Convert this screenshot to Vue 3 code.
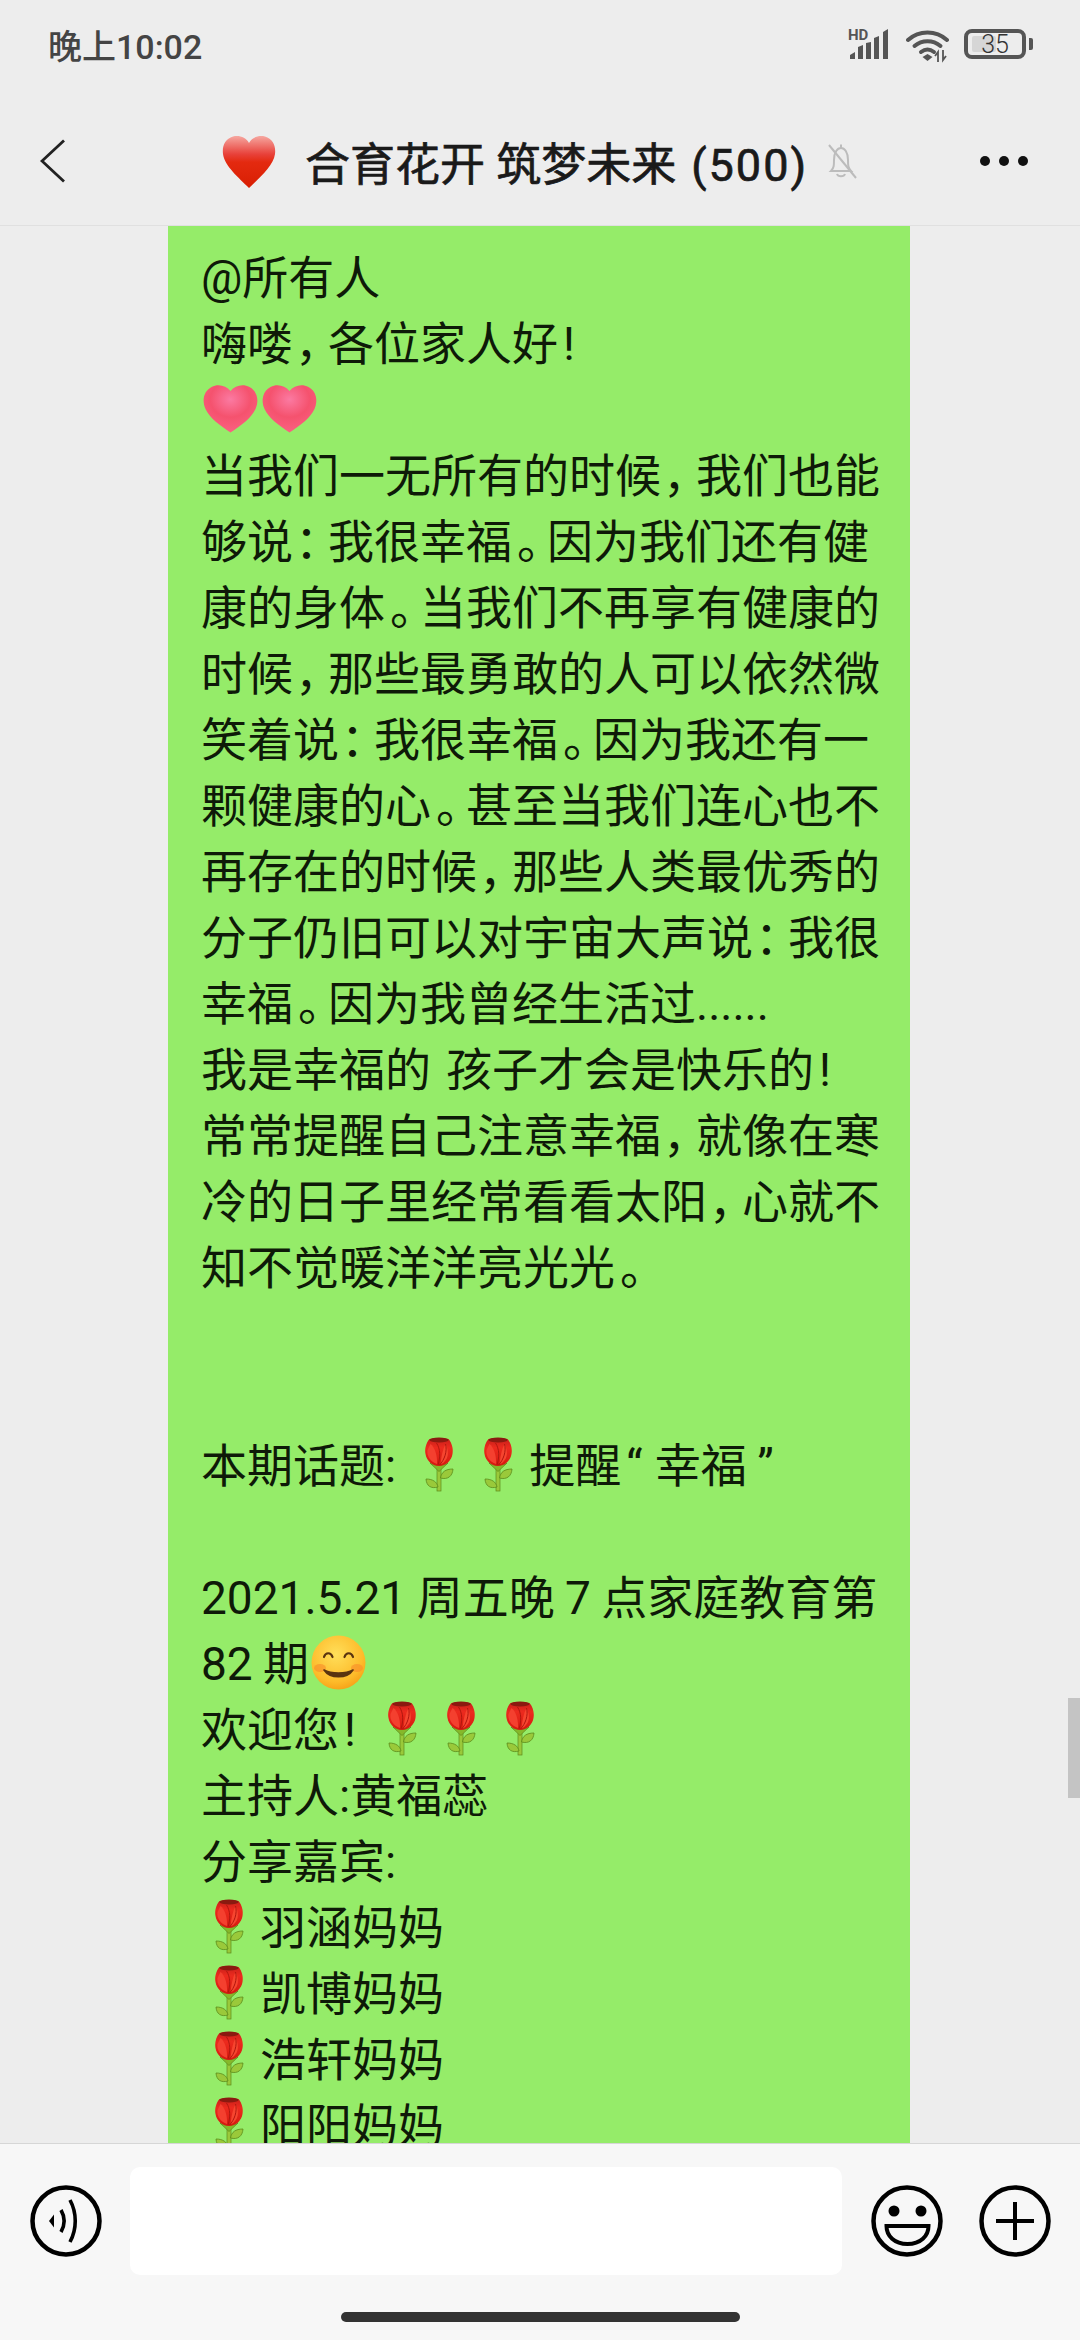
<template>
  <div class="screen">
    <!-- 공용 이모지 정의 -->
    <svg class="defs" aria-hidden="true">
      <defs>
        <linearGradient id="redHeart" x1="0" y1="0" x2="0" y2="1">
          <stop offset="0" stop-color="#f6a7a0" />
          <stop offset="0.35" stop-color="#e8413a" />
          <stop offset="0.5" stop-color="#e42a10" />
          <stop offset="1" stop-color="#d81e02" />
        </linearGradient>
        <radialGradient id="pinkHeart" cx="0.5" cy="0.3" r="0.75">
          <stop offset="0" stop-color="#fb7aa2" />
          <stop offset="0.5" stop-color="#f5526e" />
          <stop offset="1" stop-color="#fb6485" />
        </radialGradient>
        <radialGradient id="smileFace" cx="0.45" cy="0.35" r="0.72">
          <stop offset="0" stop-color="#ffdf5a" />
          <stop offset="0.7" stop-color="#fdbb2a" />
          <stop offset="1" stop-color="#f59a12" />
        </radialGradient>
        <linearGradient id="roseHead" x1="0" y1="0" x2="0" y2="1">
          <stop offset="0" stop-color="#c4201a" />
          <stop offset="0.35" stop-color="#ec2a1e" />
          <stop offset="1" stop-color="#d41a10" />
        </linearGradient>
        <symbol id="rose" viewBox="0 0 59 59">
          <rect x="26" y="32" width="4" height="24" fill="#9ac93a" stroke="#5c8a1a" stroke-width="0.700" />
          <path d="M29.500 43c1-6 5-9 12.500-9-.5 7-5 11-12.500 9z" fill="#9ac93a" stroke="#5c8a1a" stroke-width="0.800" />
          <path d="M27 52c-1-5-5-8-12-8 .5 7 5 10 12 8z" fill="#9ac93a" stroke="#5c8a1a" stroke-width="0.800" />
          <path d="M19 28l9 8.500 9-8.500c-4 3-14 3-18 0z" fill="#86b82a" stroke="#5c8a1a" stroke-width="0.700" />
          <g transform="translate(-1.500 0)">
            <path d="M20 4C24 2.500 35 2.500 39 4c3.500 4 5 10 4 15-1 7-7 12-13.500 12C23 31 17 26 16 19c-1-5 .5-11 4-15z" fill="url(#roseHead)" />
            <path d="M21 9c4 3 7 11 6.500 20C21 27 17 21 18 15z" fill="#f4402f" />
            <path d="M36 9c3 6 3 11 1 15-2 3-4 5-6 5 1-8 2-14 5-20z" fill="#f6452f" />
            <path d="M27 8c4 6 4 14 1.500 22M36 9c2 7-1 16-6 21" fill="none" stroke="#b0160e" stroke-width="1" />
            <ellipse cx="29.500" cy="5" rx="9.500" ry="2.600" fill="#8a1a10" />
          </g>
        </symbol>
        <symbol id="heart" viewBox="0 0 59 59">
          <path d="M29.500 12C25 6.500 17 4.500 10.500 8 3 12 .500 21 4.500 30c4 9 15 17 25 23.500C39.500 47 50.500 39 54.500 30c4-9 1.500-18-6-22C42 4.500 34 6.500 29.500 12z" fill="url(#pinkHeart)" />
        </symbol>
        <symbol id="smile" viewBox="0 0 59 59">
          <circle cx="29.500" cy="29.500" r="27" fill="url(#smileFace)" />
          <ellipse cx="11" cy="35" rx="6" ry="4" fill="#f88a2a" opacity="0.6" />
          <ellipse cx="48" cy="35" rx="6" ry="4" fill="#f88a2a" opacity="0.6" />
          <path d="M15 24c1.500-5 7-5 8.500 0M35.500 24c1.500-5 7-5 8.500 0" stroke="#5a3410" stroke-width="2.200" fill="none" stroke-linecap="round" />
          <path d="M15 37c6 9 23 9 29 0-7 4-22 4-29 0z" fill="#5a3410" stroke="#5a3410" stroke-width="1.600" stroke-linejoin="round" />
        </symbol>
      </defs>
    </svg>

    <header class="top">
      <div class="status">
        <span class="clock">晚上10:02</span>
        <div class="status-icons">
          <svg class="ic-signal" width="42" height="32" viewBox="0 0 42 32">
            <text x="0" y="12" class="hd">HD</text>
            <path d="M2 31v-4l5-3v7zM10 31V19l5-2v14zM18 31V15l5-1v17zM26 31V10l5-2v23zM35 31V4l5-3v30z" fill="#555" />
          </svg>
          <svg class="ic-wifi" width="44" height="33" viewBox="0 0 44 33">
            <g fill="none" stroke="#555" stroke-width="4" stroke-linecap="round">
              <path d="M2 10c11-10 28-10 39 0" />
              <path d="M8.500 16c7.500-6.500 18.500-6.500 26 0" />
              <path d="M15 22c4-3 9-3 13 0" />
            </g>
            <path d="M21.500 24l5 3-5 4-5-4z" fill="#555" />
            <path d="M32 32V22l-3 4M37 20v10l3-4" fill="none" stroke="#555" stroke-width="1.800" />
          </svg>
          <div class="battery">
            <span class="battery-fill"></span>
            <span class="battery-num">35</span>
            <span class="battery-cap"></span>
          </div>
        </div>
      </div>
      <div class="nav">
        <svg class="back" width="25" height="44" viewBox="0 0 25 44">
          <path d="M24 1.500 2 22l22 20.500" fill="none" stroke="#222" stroke-width="2.800" />
        </svg>
        <svg class="title-heart" width="54" height="53" viewBox="0 0 54 53">
          <path d="M27 8C24 2 17 0 11 1.500 3 4 0 11 1 19c1.500 12 16 24 26 34 10-10 24.500-22 26-34 1-8-2-15-10-17.500C37 0 30 2 27 8z" fill="url(#redHeart)" />
        </svg>
        <span class="title">合育花开 筑梦未来<span class="count">(500)</span></span>
        <svg class="mute" width="36" height="36" viewBox="0 0 36 36">
          <g fill="none" stroke="#bcbcbc" stroke-width="2">
            <path d="M17 1.500v3M7 28c3-3 3-6 3-11 0-8 3.500-12 7-12s7 4 7 12c0 5 0 8 3 11z" />
            <path d="M13 31c1 3 7 3 8 0" />
            <path d="M5 2l27 33" />
          </g>
        </svg>
        <div class="more"><i></i><i></i><i></i></div>
      </div>
    </header>

    <main class="chat">
      <div class="bubble">
        <div v-for="(line, i) in rows" :key="i" class="line">
          <template v-for="(part, j) in line" :key="j">
            <svg v-if="part.icon" class="emoji"><use :href="part.icon" /></svg>
            <span v-else :class="part.cls">{{ part.text }}</span>
          </template>
        </div>
      </div>
      <div class="scroll-thumb"></div>
    </main>

    <footer class="bottom">
      <div class="input-row">
        <svg class="round" viewBox="0 0 72 72">
          <circle cx="36" cy="36" r="33.500" fill="none" stroke="#000" stroke-width="4.500" />
          <path d="M19 36l5-6.500v13z" fill="#000" />
          <path d="M31 25c4 7 4 15 0 22" fill="none" stroke="#000" stroke-width="3.600" />
          <path d="M40 15c7 13 7 29 0 42" fill="none" stroke="#000" stroke-width="3.600" />
        </svg>
        <div class="input"></div>
        <svg class="round" viewBox="0 0 72 72">
          <circle cx="36" cy="36" r="33.500" fill="none" stroke="#000" stroke-width="4.500" />
          <circle cx="23" cy="26" r="5.500" />
          <circle cx="50" cy="26" r="5.500" />
          <path d="M15.500 41h42c0 10-8 18-21 18s-21-8-21-18z" fill="none" stroke="#000" stroke-width="4" />
        </svg>
        <svg class="round plus" viewBox="0 0 72 72">
          <circle cx="36" cy="36" r="33.500" fill="none" stroke="#000" stroke-width="4.500" />
          <path d="M36 17v38M17 36h38" stroke="#000" stroke-width="4" />
        </svg>
      </div>
      <div class="home-bar"></div>
    </footer>
  </div>
</template>

<script setup>
const rose = '#rose'
const lines = [
  ['@所有人'],
  ['嗨喽，各位家人好!'],
  ['#heart', '#heart'],
  ['当我们一无所有的时候，我们也能'],
  ['够说：我很幸福。因为我们还有健'],
  ['康的身体。当我们不再享有健康的'],
  ['时候，那些最勇敢的人可以依然微'],
  ['笑着说：我很幸福。因为我还有一'],
  ['颗健康的心。甚至当我们连心也不'],
  ['再存在的时候，那些人类最优秀的'],
  ['分子仍旧可以对宇宙大声说：我很'],
  ['幸福。因为我曾经生活过......'],
  ['我是幸福的', '~', '孩子才会是快乐的!'],
  ['常常提醒自己注意幸福，就像在寒'],
  ['冷的日子里经常看看太阳，心就不'],
  ['知不觉暖洋洋亮光光。'],
  [],
  [],
  ['本期话题:', '~', rose, rose, '提醒“ 幸福 ”'],
  [],
  ['2021.5.21 周五晚 7 点家庭教育第'],
  ['82 期', '#smile'],
  ['欢迎您!', rose, rose, rose],
  ['主持人:黄福蕊'],
  ['分享嘉宾:'],
  [rose, '羽涵妈妈'],
  [rose, '凯博妈妈'],
  [rose, '浩轩妈妈'],
  [rose, '阳阳妈妈'],
]

// 문장부호는 폭이 좁아서 따로 감싼다
const punctClass = (text) => {
  if (text === '“') return 'quote'
  if (text === '。' || text === '!') return 'punc ring'
  if (text === '，' || text === '：') return 'punc'
  return ''
}

const toParts = (part) => {
  if (part.startsWith('#')) return [{ icon: part }]
  if (part === '~') return [{ text: ' ', cls: 'gap' }]
  return part
    .split(/([，：!。“])/)
    .filter(Boolean)
    .map((text) => ({ text, cls: punctClass(text) }))
}

const rows = lines.map((line) => line.flatMap(toParts))
</script>

<style>
html,
body {
  margin: 0;
  background: #ededed;
}
</style>

<style scoped>
.screen {
  width: 1080px;
  height: 2340px;
  display: flex;
  flex-direction: column;
  overflow: hidden;
  background: #ededed;
  font-family: Roboto, "Noto Sans CJK SC", sans-serif;
}
.defs {
  position: absolute;
  width: 0;
  height: 0;
}
.top {
  flex-shrink: 0;
  height: 226px;
  box-sizing: border-box;
  border-bottom: 1px solid #e0e0e0;
}
.status {
  height: 88px;
  display: flex;
  align-items: center;
  justify-content: space-between;
  padding: 0 54px 0 48px;
}
.clock {
  font-size: 34px;
  font-weight: 500;
  color: #444;
}
.status-icons {
  display: flex;
  align-items: center;
}
.ic-signal {
  overflow: visible;
}
.hd {
  font-family: Roboto, sans-serif;
  font-size: 15px;
  font-weight: 700;
  fill: #555;
}
.ic-wifi {
  margin-left: 16px;
  margin-top: 4px;
}
.battery {
  position: relative;
  width: 62px;
  height: 30px;
  margin-left: 14px;
  box-sizing: border-box;
  border: 4px solid #555;
  border-radius: 8px;
  display: flex;
  align-items: center;
  justify-content: center;
}
.battery-fill {
  position: absolute;
  left: 4px;
  top: 3px;
  bottom: 3px;
  width: 24px;
  background: #d6d6d6;
  border-radius: 2px;
}
.battery-num {
  position: relative;
  font-size: 25px;
  font-weight: 300;
  color: #333;
}
.battery-cap {
  position: absolute;
  right: -11px;
  top: 5px;
  width: 4px;
  height: 12px;
  background: #555;
  border-radius: 0 2px 2px 0;
}
.nav {
  height: 137px;
  box-sizing: border-box;
  display: flex;
  align-items: center;
  padding: 9px 52px 0 40px;
}
.title-heart {
  margin-left: 157px;
}
.title {
  margin-left: 29px;
  font-size: 45px;
  font-weight: 400;
  color: #1a1a1a;
  white-space: pre;
  -webkit-text-stroke: 0.7px #1a1a1a;
}
.count {
  margin-left: 15px;
  letter-spacing: 2px;
}
.mute {
  margin-left: 16px;
}
.more {
  margin-left: auto;
  display: flex;
  gap: 9px;
}
.more i {
  width: 10px;
  height: 10px;
  border-radius: 50%;
  background: #111;
}
.chat {
  position: relative;
  flex: 1;
  min-height: 0;
  overflow: hidden;
}
.bubble {
  width: 742px;
  margin-left: 168px;
  box-sizing: border-box;
  padding: 19px 30px 0 33px;
  background: #95ec69;
}
.line {
  height: 66px;
  line-height: 66px;
  font-size: 46px;
  color: #0e1a08;
  white-space: pre;
  word-spacing: -1px;
}
.emoji {
  width: 59px;
  height: 59px;
  vertical-align: top;
  margin-top: 2px;
}
.punc {
  display: inline-block;
  box-sizing: border-box;
  width: 35px;
  padding-left: 2px;
  font-feature-settings: "halt";
}
.ring {
  padding-left: 5px;
}
.quote {
  margin: 0 2px 0 5px;
}
.gap {
  display: inline-block;
  width: 15px;
}
.scroll-thumb {
  position: absolute;
  right: 0;
  top: 1472px;
  width: 12px;
  height: 100px;
  background: #c4c4c4;
}
.bottom {
  flex-shrink: 0;
  height: 197px;
  box-sizing: border-box;
  padding-top: 23px;
  border-top: 1px solid #d6d6d6;
  background: #f7f7f7;
}
.input-row {
  height: 108px;
  display: flex;
  align-items: center;
  padding-left: 30px;
}
.round {
  width: 72px;
  height: 72px;
  flex-shrink: 0;
}
.input {
  width: 712px;
  height: 108px;
  margin: 0 29px 0 28px;
  background: #fff;
  border-radius: 10px;
}
.plus {
  margin-left: 36px;
}
.home-bar {
  width: 399px;
  height: 10px;
  margin: 37px auto 0;
  background: #333;
  border-radius: 5px;
}
</style>
